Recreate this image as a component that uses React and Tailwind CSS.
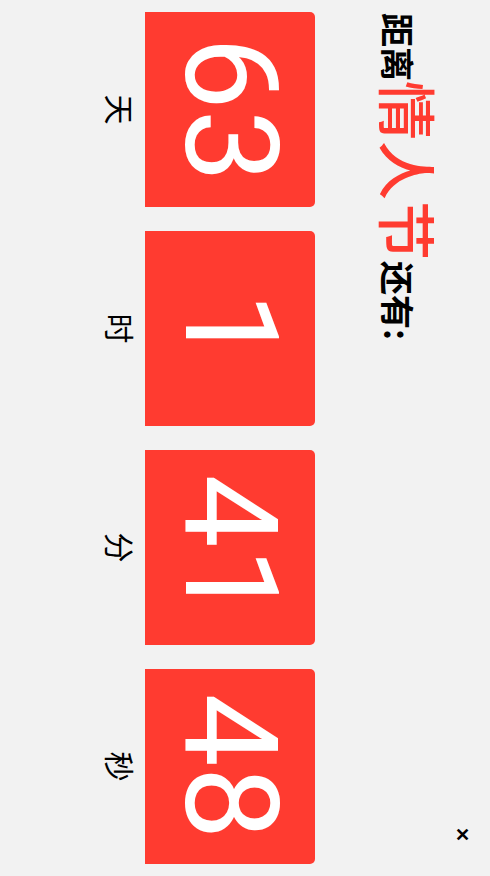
export default function App() {
  const items = [
    { v: "63", l: "天" },
    { v: "1", l: "时" },
    { v: "41", l: "分" },
    { v: "48", l: "秒" },
  ];
  return (
    <div className="w-[490px] h-[876px] overflow-hidden bg-[#f2f2f2]">
      <div
        className="relative w-[876px] h-[490px] origin-top-left [transform:translateX(490px)_rotate(90deg)] bg-[#f2f2f2] px-3"
        style={{ fontFamily: '"Noto Sans CJK SC", "Noto Sans", sans-serif' }}
      >
        <div className="absolute right-[34px] top-[17px] text-[18px] font-bold leading-none text-black">✕</div>
        <div className="pt-[51px] pl-[1px] h-[111px] flex items-baseline leading-none">
          <span className="text-[34px] font-bold text-black">距离</span>
          <span className="text-[59px] font-medium text-[#ff3b30] tracking-[1px]">情人节</span>
          <span className="text-[34px] font-bold text-black">还有:</span>
        </div>
        <div className="mt-[64px] flex gap-6">
          {items.map((it) => (
            <div key={it.l} className="flex-1 flex flex-col items-center">
              <div
                className="w-full h-[170px] rounded-t-[5px] bg-[#ff3b30] flex items-center justify-center text-white text-[130px] font-normal leading-none"
                style={{ fontFamily: 'Roboto, "Noto Sans", sans-serif' }}
              >
                {it.v}
              </div>
              <div className="mt-[6px] text-[30px] leading-[1.2] text-black">{it.l}</div>
            </div>
          ))}
        </div>
      </div>
    </div>
  );
}
